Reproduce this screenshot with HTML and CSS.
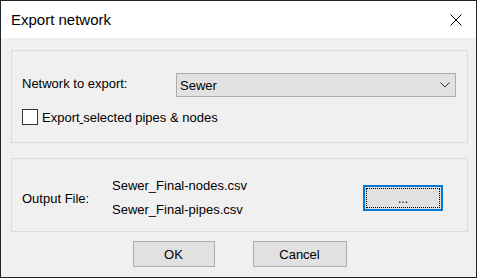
FILE: index.html
```html
<!DOCTYPE html>
<html>
<head>
<meta charset="utf-8">
<link rel="stylesheet" href="styles.css">
</head>
<body>
<div class="window">
  <div class="titlebar">
    <span class="title">Export network</span>
    <svg class="close" width="12" height="12" viewBox="0 0 12 12"><path d="M0.5 0.5 L11.5 11.5 M11.5 0.5 L0.5 11.5" stroke="#000" stroke-width="1" fill="none"/></svg>
  </div>
  <div class="content">
    <div class="group group-network">
      <div class="row">
        <span class="label net-label">Network to export:</span>
        <div class="select">
          <span class="select-text">Sewer</span>
          <svg class="chev" width="10" height="6" viewBox="0 0 10 6"><path d="M0.5 0.5 L5 5 L9.5 0.5" stroke="#333" stroke-width="1" fill="none"/></svg>
        </div>
      </div>
      <div class="check-row">
        <span class="checkbox"></span>
        <span class="label">Export<span class="mn"> </span>selected pipes &amp; nodes</span>
      </div>
    </div>
    <div class="group group-output">
      <span class="label out-label">Output File:</span>
      <div class="files">
        <div class="file">Sewer_Final-nodes.csv</div>
        <div class="file">Sewer_Final-pipes.csv</div>
      </div>
      <div class="btn btn-browse"><span class="focus">...</span></div>
    </div>
    <div class="buttons">
      <div class="btn btn-ok">OK</div>
      <div class="btn btn-cancel">Cancel</div>
    </div>
  </div>
</div>
</body>
</html>
```
FILE: styles.css
```css
html, body {
  margin: 0;
  padding: 0;
  background: #f0f0f0;
}
body {
  font-family: "Liberation Sans", Arial, sans-serif;
  font-size: 13px;
  color: #000;
}
.window {
  width: 477px;
  height: 278px;
  box-sizing: border-box;
  border: 1px solid #1e242b;
  background: #f0f0f0;
  display: flex;
  flex-direction: column;
}
.titlebar {
  height: 37px;
  background: #fff;
  display: flex;
  align-items: center;
  justify-content: space-between;
  padding: 0 14px 0 10px;
  flex: none;
}
.title {
  font-size: 15px;
  margin-top: 0;
}
.close {
  display: block;
  margin-top: 1px;
}
.content {
  padding: 12px 8px 0 10px;
  display: flex;
  flex-direction: column;
}
.group {
  border: 1px solid #dcdcdc;
  box-sizing: border-box;
}
.group-network {
  height: 93px;
  padding: 22px 11px 0 10px;
  display: flex;
  flex-direction: column;
}
.row {
  display: flex;
  align-items: center;
  height: 24px;
}
.net-label {
  width: 154px;
  margin-bottom: 4px;
}
.select {
  flex: 1;
  height: 24px;
  box-sizing: border-box;
  border: 1px solid #adadad;
  background: #e1e1e1;
  display: flex;
  align-items: center;
  justify-content: space-between;
  padding: 0 5px 0 3px;
}
.select-text {
  margin-top: 1px;
}
.chev {
  display: block;
}
.check-row {
  display: flex;
  align-items: center;
  margin-top: 12px;
  height: 16px;
}
.checkbox {
  width: 16px;
  height: 16px;
  box-sizing: border-box;
  border: 1px solid #333;
  background: #fff;
  margin-right: 4px;
}
.mn {
  text-decoration: underline;
}
.group-output {
  margin-top: 15px;
  height: 74px;
  padding: 15px 24px 9px 10px;
  display: flex;
  align-items: center;
}
.out-label {
  width: 90px;
}
.files {
  display: flex;
  flex-direction: column;
}
.file {
  line-height: 24px;
  height: 24px;
}
.btn {
  box-sizing: border-box;
  border: 1px solid #adadad;
  background: #e1e1e1;
  display: flex;
  align-items: center;
  justify-content: center;
  height: 26px;
}
.btn-browse {
  margin-left: auto;
  width: 80px;
  border: 2px solid #0078d7;
  padding: 1px;
}
.focus {
  flex: 1;
  align-self: stretch;
  border: 1px dotted #000;
  display: flex;
  align-items: center;
  justify-content: center;
  padding-top: 2px;
  font-size: 12px;
}
.buttons {
  display: flex;
  justify-content: center;
  gap: 38px;
  margin-top: 9px;
}
.btn-ok {
  width: 82px;
}
.btn-cancel {
  width: 94px;
}
```
